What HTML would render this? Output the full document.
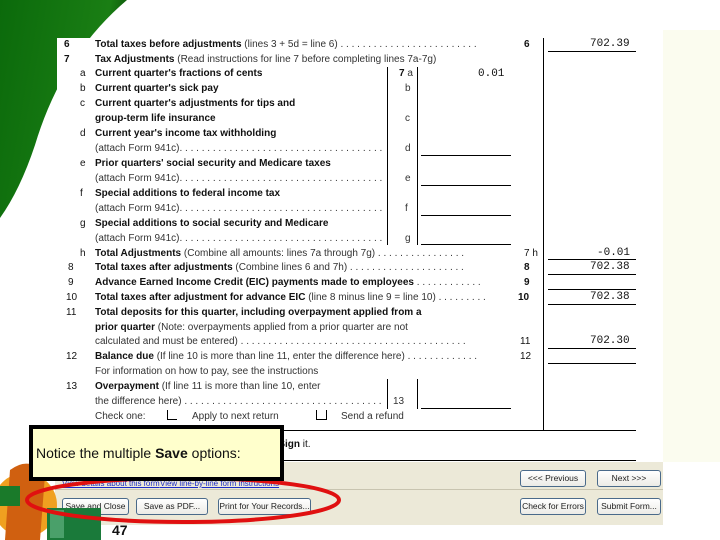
<!DOCTYPE html>
<html><head><meta charset="utf-8"><style>
body{margin:0;width:720px;height:540px;position:relative;overflow:hidden;background:#fff;font-family:"Liberation Sans",sans-serif}
.a{position:absolute;white-space:nowrap;font-size:10px;line-height:12px;color:#111}
.b{font-weight:bold}
.n{font-weight:normal;color:#333}
.w1{width:288px;overflow:hidden}
.w2{width:414px;overflow:hidden}
.hl{position:absolute;height:1px;background:#000}
.vl{position:absolute;width:1px;background:#000}
.btn{position:absolute;height:15px;border:1px solid #4a6a8a;border-radius:3px;background:linear-gradient(#fff,#ecebe6);font-size:8.5px;line-height:15px;text-align:center;color:#222}
.num{font-family:"Liberation Mono",monospace;font-size:11px}
</style></head><body>
<svg style="position:absolute;left:0;top:0" width="720" height="540">
<defs><linearGradient id="g" x1="0" y1="0" x2="1" y2="0.3"><stop offset="0" stop-color="#0b6a0b"/><stop offset="0.8" stop-color="#1a7e14"/><stop offset="1" stop-color="#0a4a08"/></linearGradient></defs>
<path d="M0,0 L127,0 Q62,55 35,145 Q20,190 0,218 Z" fill="url(#g)"/>
<rect x="663" y="30" width="57" height="432" fill="#fbfcef"/>
</svg>
<div style="position:absolute;left:57px;top:38px;width:606px;height:424px;background:#fff"></div>

<div class="a b" style="left:64px;top:39px">6</div><div class="a b w2" style="left:95px;top:39px">Total taxes before adjustments <span class="n">(lines 3 + 5d = line 6) . . . . . . . . . . . . . . . . . . . . . . . . .</span></div>
<div class="a b" style="left:64px;top:54px">7</div><div class="a b" style="left:95px;top:54px">Tax Adjustments <span class="n">(Read instructions for line 7 before completing lines 7a-7g)</span></div>
<div class="a" style="left:80px;top:68px">a</div><div class="a b" style="left:95px;top:68px">Current quarter's fractions of cents</div>
<div class="a" style="left:80px;top:83px">b</div><div class="a b" style="left:95px;top:83px">Current quarter's sick pay</div>
<div class="a" style="left:80px;top:98px">c</div><div class="a b" style="left:95px;top:98px">Current quarter's adjustments for tips and</div>
<div class="a b" style="left:95px;top:113px">group-term life insurance</div>
<div class="a" style="left:80px;top:128px">d</div><div class="a b" style="left:95px;top:128px">Current year's income tax withholding</div>
<div class="a n w1" style="left:95px;top:143px">(attach Form 941c). . . . . . . . . . . . . . . . . . . . . . . . . . . . . . . . . . . . . . . . . . .</div>
<div class="a" style="left:80px;top:158px">e</div><div class="a b" style="left:95px;top:158px">Prior quarters' social security and Medicare taxes</div>
<div class="a n w1" style="left:95px;top:173px">(attach Form 941c). . . . . . . . . . . . . . . . . . . . . . . . . . . . . . . . . . . . . . . . . . .</div>
<div class="a" style="left:80px;top:188px">f</div><div class="a b" style="left:95px;top:188px">Special additions to federal income tax</div>
<div class="a n w1" style="left:95px;top:203px">(attach Form 941c). . . . . . . . . . . . . . . . . . . . . . . . . . . . . . . . . . . . . . . . . . .</div>
<div class="a" style="left:80px;top:218px">g</div><div class="a b" style="left:95px;top:218px">Special additions to social security and Medicare</div>
<div class="a n w1" style="left:95px;top:233px">(attach Form 941c). . . . . . . . . . . . . . . . . . . . . . . . . . . . . . . . . . . . . . . . . . .</div>
<div class="a" style="left:80px;top:248px">h</div><div class="a b w2" style="left:95px;top:248px">Total Adjustments <span class="n">(Combine all amounts: lines 7a through 7g) . . . . . . . . . . . . . . . .</span></div>
<div class="a" style="left:68px;top:262px">8</div><div class="a b w2" style="left:95px;top:262px">Total taxes after adjustments <span class="n">(Combine lines 6 and 7h) . . . . . . . . . . . . . . . . . . . . .</span></div>
<div class="a" style="left:68px;top:277px">9</div><div class="a b w2" style="left:95px;top:277px">Advance Earned Income Credit (EIC) payments made to employees <span class="n">. . . . . . . . . . . .</span></div>
<div class="a" style="left:66px;top:292px">10</div><div class="a b w2" style="left:95px;top:292px">Total taxes after adjustment for advance EIC <span class="n">(line 8 minus line 9 = line 10) . . . . . . . . .</span></div>
<div class="a" style="left:66px;top:307px">11</div><div class="a b" style="left:95px;top:307px">Total deposits for this quarter, including overpayment applied from a</div>
<div class="a b" style="left:95px;top:322px">prior quarter <span class="n">(Note: overpayments applied from a prior quarter are not</span></div>
<div class="a n w2" style="left:95px;top:336px">calculated and must be entered) . . . . . . . . . . . . . . . . . . . . . . . . . . . . . . . . . . . . . . . . .</div>
<div class="a" style="left:66px;top:351px">12</div><div class="a b w2" style="left:95px;top:351px">Balance due <span class="n">(If line 10 is more than line 11, enter the difference here) . . . . . . . . . . . . .</span></div>
<div class="a n" style="left:95px;top:366px">For information on how to pay, see the instructions</div>
<div class="a" style="left:66px;top:381px">13</div><div class="a b" style="left:95px;top:381px">Overpayment <span class="n">(If line 11 is more than line 10, enter</span></div>
<div class="a n w1" style="left:95px;top:396px">the difference here) . . . . . . . . . . . . . . . . . . . . . . . . . . . . . . . . . . . . . . . . . . . .</div>
<div class="a n" style="left:393px;top:396px">13</div>
<div class="a n" style="left:95px;top:411px">Check one:</div>
<div style="position:absolute;left:167px;top:410px;width:9px;height:9px;border-left:1px solid #000;border-bottom:1px solid #000"></div>
<div class="a n" style="left:192px;top:411px">Apply to next return</div>
<div style="position:absolute;left:316px;top:410px;width:9px;height:9px;border:1px solid #000;border-top:none"></div>
<div class="a n" style="left:341px;top:411px">Send a refund</div>

<div class="a b" style="left:399px;top:68px">7 <span class="n">a</span></div>
<div class="a n" style="left:405px;top:83px">b</div><div class="a n" style="left:405px;top:113px">c</div>
<div class="a n" style="left:405px;top:143px">d</div><div class="a n" style="left:405px;top:173px">e</div>
<div class="a n" style="left:405px;top:203px">f</div><div class="a n" style="left:405px;top:233px">g</div>
<div class="a num" style="left:478px;top:68px">0.01</div>
<div class="vl" style="left:387px;top:67px;height:178px"></div>
<div class="vl" style="left:417px;top:67px;height:178px"></div>
<div class="hl" style="left:421px;top:155px;width:90px"></div>
<div class="hl" style="left:421px;top:185px;width:90px"></div>
<div class="hl" style="left:421px;top:215px;width:90px"></div>
<div class="hl" style="left:421px;top:244px;width:90px"></div>
<div class="vl" style="left:387px;top:379px;height:30px"></div>
<div class="vl" style="left:417px;top:379px;height:30px"></div>
<div class="hl" style="left:421px;top:408px;width:90px"></div>

<div class="a b" style="left:524px;top:39px">6</div>
<div class="a" style="left:524px;top:248px">7 h</div>
<div class="a b" style="left:524px;top:262px">8</div>
<div class="a b" style="left:524px;top:277px">9</div>
<div class="a b" style="left:518px;top:292px">10</div>
<div class="a" style="left:520px;top:336px">11</div>
<div class="a" style="left:520px;top:351px">12</div>
<div class="vl" style="left:543px;top:38px;height:392px"></div>
<div class="a num" style="left:590px;top:38px">702.39</div><div class="hl" style="left:548px;top:51px;width:88px"></div>
<div class="a num" style="left:597px;top:247px">-0.01</div><div class="hl" style="left:548px;top:259px;width:88px"></div>
<div class="a num" style="left:590px;top:261px">702.38</div><div class="hl" style="left:548px;top:274px;width:88px"></div>
<div class="hl" style="left:548px;top:289px;width:88px"></div>
<div class="a num" style="left:590px;top:291px">702.38</div><div class="hl" style="left:548px;top:304px;width:88px"></div>
<div class="a num" style="left:590px;top:335px">702.30</div><div class="hl" style="left:548px;top:348px;width:88px"></div>
<div class="hl" style="left:548px;top:363px;width:88px"></div>
<div class="hl" style="left:57px;top:430px;width:579px"></div>
<div class="a" style="left:270px;top:439px"><span class="n">d</span> <b>Sign</b> it.</div>
<div class="hl" style="left:57px;top:460px;width:579px"></div>

<div style="position:absolute;left:55px;top:462px;width:608px;height:63px;background:#ece9d8"></div>
<div class="hl" style="left:55px;top:489px;width:608px;background:#c8c4b0"></div>
<div class="a" style="left:62px;top:478px;font-size:8px;color:#1a2ac8;text-decoration:underline">View details about this form</div>
<div class="a" style="left:160px;top:478px;font-size:8px;color:#1a2ac8;text-decoration:underline">View line-by-line form instructions</div>
<div class="btn" style="left:520px;top:470px;width:64px">&lt;&lt;&lt; Previous</div>
<div class="btn" style="left:597px;top:470px;width:62px">Next &gt;&gt;&gt;</div>
<div class="btn" style="left:62px;top:498px;width:65px">Save and Close</div>
<div class="btn" style="left:136px;top:498px;width:70px">Save as PDF...</div>
<div class="btn" style="left:218px;top:498px;width:91px">Print for Your Records...</div>
<div class="btn" style="left:520px;top:498px;width:64px">Check for Errors</div>
<div class="btn" style="left:597px;top:498px;width:62px">Submit Form...</div>

<svg style="position:absolute;left:0;top:0" width="720" height="540">
<circle cx="25" cy="505" r="32" fill="#f0a020"/>
<path d="M10,470 Q30,455 45,475 L40,540 L5,540 Z" fill="#d06010"/>
<rect x="0" y="486" width="20" height="20" fill="#1a7a2a"/>
<rect x="47" y="508" width="54" height="32" fill="#1a7a3a"/>
<rect x="50" y="510" width="14" height="28" fill="#4aa06a"/>
<ellipse cx="183" cy="500" rx="156" ry="22" fill="none" stroke="#e01010" stroke-width="4"/>
</svg>
<div class="a b" style="left:112px;top:522px;font-size:14px;line-height:16px">47</div>

<div style="position:absolute;left:29px;top:425px;width:247px;height:48px;background:#ffffcc;border:4px solid #000"></div>
<div class="a" style="left:36px;top:444px;font-size:14px;line-height:18px;color:#111">Notice the multiple <b>Save</b> options:</div>
</body></html>
